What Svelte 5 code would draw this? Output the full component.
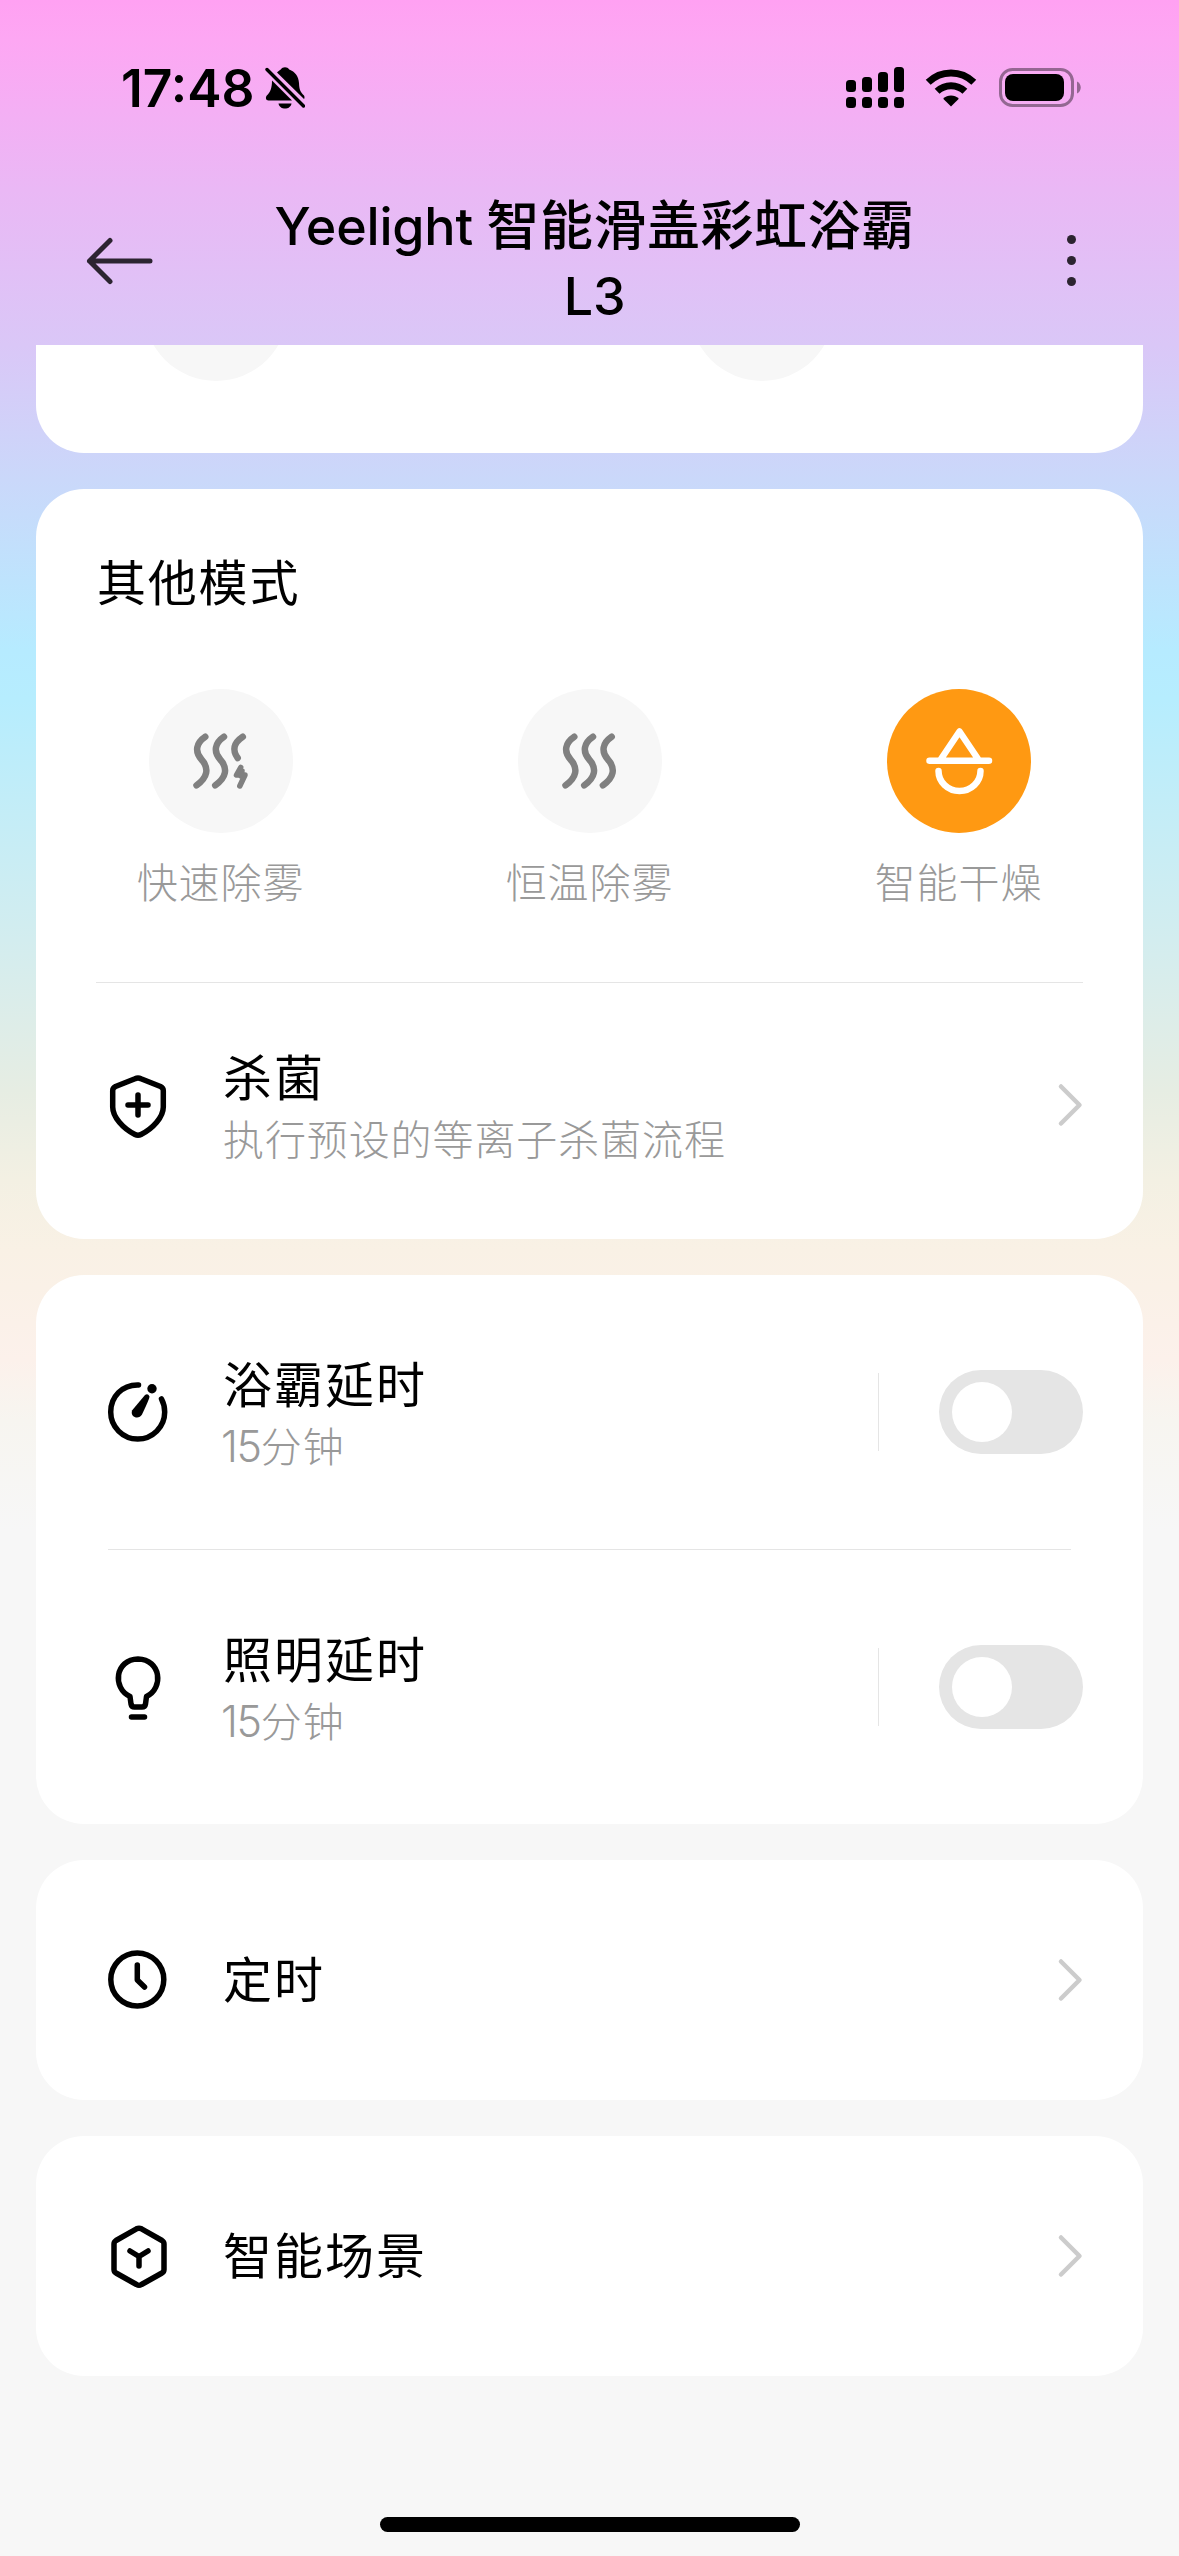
<script>
  let bathDelay = $state(false);
  let lightDelay = $state(false);

  const modes = [
    { id: "fast", name: "快速除雾", active: false },
    { id: "steady", name: "恒温除雾", active: false },
    { id: "dry", name: "智能干燥", active: true },
  ];
</script>

{#snippet chevron()}
  <svg class="chevron" width="26" height="46" viewBox="0 0 26 46">
    <path d="M4 4.500 L22.500 23 L4 41.500" />
  </svg>
{/snippet}

<div class="page">
  <div class="status-bar">
    <span class="time">17:48</span>
    <svg class="bell" width="40" height="44" viewBox="0 0 40 44">
      <path d="M12 6.5 C13.5 4.8 14.8 4.2 15.8 3.4 C17.5 .6 22.500 .6 24.200 3.400 C30 5.500 33.500 10 34 17 C34.200 23.500 35.500 26 39 29.500 C39.800 31 39.500 32.500 39 33 Z" />
      <path d="M7 14.500 L27 34.500 H3.500 C.8 34.500 .2 31.500 1.800 29.500 C5.500 26 7 22 7 14.500 Z" />
      <path d="M13.500 37.500 H26.500 C25.500 44.300 14.500 44.300 13.500 37.500 Z" />
      <path class="slash" d="M2 3.500 L38.500 40" />
    </svg>
    <div class="status-icons">
      <svg width="58" height="42" viewBox="0 0 58 42">
        <rect x="0" y="13" width="10" height="12" rx="3.500" />
        <rect x="16" y="10" width="10" height="15" rx="3.500" />
        <rect x="32" y="5" width="10" height="20" rx="3.500" />
        <rect x="48" y="0" width="10" height="25" rx="3.500" />
        <rect x="0" y="30" width="10" height="11" rx="3.500" />
        <rect x="16" y="30" width="10" height="11" rx="3.500" />
        <rect x="32" y="30" width="10" height="11" rx="3.500" />
        <rect x="48" y="30" width="10" height="11" rx="3.500" />
      </svg>
      <svg class="wifi" width="52" height="38" viewBox="0 0 52 38">
        <path class="arc" d="M3.200 13.300 C16 .8 36 .8 48.800 13.300" />
        <path class="arc" d="M12.100 22.300 C20 14.800 32 14.800 39.900 22.300" />
        <path d="M26 37.500 L18.200 29.700 C22.500 25.300 29.500 25.300 33.800 29.700 Z" />
      </svg>
      <svg class="battery" width="82" height="40" viewBox="0 0 82 40">
        <rect class="shell" x="1.500" y="1.500" width="72" height="36" rx="12" />
        <rect x="6" y="6" width="59" height="27" rx="8" />
        <path class="cap" d="M78 13.500 C83 15.500 83 23.500 78 25.500 Z" />
      </svg>
    </div>
  </div>

  <header>
    <button class="back" aria-label="返回">
      <svg width="68" height="48" viewBox="0 0 68 48">
        <path d="M24 3.500 L3.500 24 L24 44.500 M3.500 24 H64" />
      </svg>
    </button>
    <h1>Yeelight <span>智能滑盖彩虹浴霸</span> L3</h1>
    <button class="more" aria-label="更多">
      <i></i><i></i><i></i>
    </button>
  </header>

  <main>
    <section class="card clipped">
      <div class="circle"></div>
      <div class="circle"></div>
    </section>

    <section class="card">
      <h2>其他模式</h2>
      <div class="modes">
        {#each modes as mode (mode.id)}
          <div class="mode">
            <div class="circle" class:active={mode.active}>
              <svg width="72" height="72" viewBox="0 0 72 72">
                {#if mode.id === "dry"}
                  <path d="M18 34 L36.500 6.500 L55 34 M6.500 35.700 H66 M15.500 46 A21 20 0 0 0 57.500 46" />
                {:else}
                  <path d="M20.300 11.700 C11 18 9.500 26.500 16.500 34.500 C24.500 43.500 22.500 52.500 11.500 60.300" />
                  <path d="M39 11.700 C29.700 18 28.200 26.500 35.200 34.500 C43.200 43.500 41.200 52.500 30.200 60.300" />
                  {#if mode.id === "fast"}
                    <path d="M57.800 11.700 C48.500 18 47 25 52.700 33" />
                    <path class="bolt" d="M55.700 42.500 L51.500 50 H60 L54.800 61 M57 46 L56 51" />
                  {:else}
                    <path d="M57.700 11.700 C48.400 18 46.900 26.500 53.900 34.500 C61.900 43.500 59.900 52.500 48.900 60.300" />
                  {/if}
                {/if}
              </svg>
            </div>
            <span>{mode.name}</span>
          </div>
        {/each}
      </div>
      <hr />
      <div class="row sterilize">
        <svg class="icon" width="72" height="72" viewBox="0 0 72 72">
          <path d="M36 9 Q37.500 9 39 9.700 L58.500 17.500 Q61.300 18.800 61.300 21.500 V38 C61.300 48 51 59.500 39 65.500 Q36 67 33 65.500 C21 59.500 10.700 48 10.700 38 V21.500 Q10.700 18.800 13.500 17.500 L33 9.700 Q34.500 9 36 9 Z M36 26 V46 M26 36 H46" />
        </svg>
        <div class="text">
          <h3>杀菌</h3>
          <p>执行预设的等离子杀菌流程</p>
        </div>
        {@render chevron()}
      </div>
    </section>

    <section class="card">
      <div class="row delay">
        <svg class="icon" width="72" height="72" viewBox="0 0 72 72">
          <path d="M36.500 9 C20 8.500 8.700 21 8.700 36 A27 27 0 0 0 62.700 36 Q62.700 29 59.500 23" />
          <circle class="solid" cx="50" cy="12.700" r="4.700" />
          <path class="solid" d="M43 19 Q46 17 47.500 20.500 Q47.800 22 40 38.500 C37 44 28 41.500 30 34.500 Z" />
        </svg>
        <div class="text">
          <h3>浴霸延时</h3>
          <p><span class="digits">15</span>分钟</p>
        </div>
        <button
          class="switch"
          class:on={bathDelay}
          aria-label="浴霸延时"
          onclick={() => (bathDelay = !bathDelay)}
        ><i></i></button>
      </div>
      <hr class="inset" />
      <div class="row delay">
        <svg class="icon" width="72" height="72" viewBox="0 0 72 72">
          <path d="M28 45.500 C10 37 13 8.500 36 8 C59 8.500 62 37 44.500 45.500 L43.500 53 Q43 56 40 56 H32.500 Q29.500 56 29 53 Z" />
          <path d="M29.500 66 H42.500" />
        </svg>
        <div class="text">
          <h3>照明延时</h3>
          <p><span class="digits">15</span>分钟</p>
        </div>
        <button
          class="switch"
          class:on={lightDelay}
          aria-label="照明延时"
          onclick={() => (lightDelay = !lightDelay)}
        ><i></i></button>
      </div>
    </section>

    <section class="card">
      <div class="row single">
        <svg class="icon" width="72" height="72" viewBox="0 0 72 72">
          <circle cx="35.300" cy="35.500" r="26.500" />
          <path d="M35.300 21 V36 L42.500 43" />
        </svg>
        <div class="text"><h3>定时</h3></div>
        {@render chevron()}
      </div>
    </section>

    <section class="card">
      <div class="row single">
        <svg class="icon" width="72" height="72" viewBox="0 0 72 72">
          <path d="M34.500 8.800 Q37 7.500 39.500 8.800 L60 20.500 Q62 21.800 62 24 V49.500 Q62 51.800 60 53 L39.500 64.500 Q37 66 34.500 64.500 L14 53 Q12 51.800 12 49.500 V24 Q12 21.800 14 20.500 Z" />
          <path d="M28 31 L37 36.500 L46 31 M37 36.500 V46" />
        </svg>
        <div class="text"><h3>智能场景</h3></div>
        {@render chevron()}
      </div>
    </section>
  </main>

  <div class="home-indicator"></div>
</div>

<style>
  :global(body) {
    margin: 0;
  }

  .page {
    box-sizing: border-box;
    width: 1179px;
    height: 2556px;
    overflow: hidden;
    display: flex;
    flex-direction: column;
    font-family: Inter, "Noto Sans CJK SC", sans-serif;
    color: #000;
    background: linear-gradient(
      #ffa1f2 0,
      #fda7f3 40px,
      #eab8f5 190px,
      #dac7f7 345px,
      #cad8fa 480px,
      #b6ebff 650px,
      #b6edfe 700px,
      #d3edef 940px,
      #e6ede3 1090px,
      #f3f0e3 1180px,
      #f9f1e5 1250px,
      #fcf1eb 1360px,
      #f7f5f0 1420px,
      #f7f7f7 1530px
    );
  }

  .status-bar {
    display: flex;
    align-items: center;
    height: 176px;
    padding: 0 98px 0 121px;
  }

  .time {
    width: 131px;
    font-size: 51.5px;
    font-weight: 600;
    line-height: 60px;
  }

  .bell {
    margin-left: 13px;
  }

  .slash {
    fill: none;
    stroke: #000;
    stroke-width: 3.4;
    stroke-linecap: round;
  }

  .status-icons {
    display: flex;
    align-items: center;
    margin-left: auto;
  }

  .wifi {
    margin-left: 21px;
  }

  .arc {
    fill: none;
    stroke: #000;
    stroke-width: 7;
  }

  .battery {
    margin-left: 22px;
  }

  .shell {
    fill: none;
    stroke: #000;
    stroke-width: 3;
    opacity: 0.4;
  }

  .cap {
    opacity: 0.4;
  }

  header {
    display: flex;
    align-items: center;
    height: 169px;
    padding: 0 96px 0 86px;
  }

  button {
    border: 0;
    padding: 0;
    background: none;
    cursor: pointer;
  }

  .back {
    height: 48px;
  }

  .back path {
    fill: none;
    stroke: #2c2430;
    stroke-width: 5;
    stroke-linecap: round;
    stroke-linejoin: round;
  }

  h1 {
    flex: 1;
    margin: 0;
    padding: 3px 122px 0 98px;
    font-size: 52px;
    font-weight: 500;
    line-height: 70px;
    letter-spacing: -0.2px;
    text-align: center;
  }

  h1 span {
    font-size: 53px;
    line-height: 1;
    letter-spacing: 0.5px;
  }

  .more {
    display: flex;
    flex-direction: column;
    gap: 12px;
    width: 24px;
    align-items: center;
  }

  .more i {
    width: 9px;
    height: 9px;
    border-radius: 50%;
    background: #2c2430;
  }

  main {
    flex: 1;
    display: flex;
    flex-direction: column;
    gap: 36px;
    padding: 0 36px;
  }

  .card {
    padding: 0 60px;
    border-radius: 48px;
    background: #fff;
  }

  .circle {
    display: flex;
    align-items: center;
    justify-content: center;
    width: 144px;
    height: 144px;
    border-radius: 50%;
    background: #f7f7f7;
  }

  .circle.active {
    background: #ff9912;
  }

  .card.clipped {
    display: flex;
    align-items: flex-end;
    gap: 402px;
    height: 108px;
    padding: 0 108px;
    border-radius: 0 0 48px 48px;
    overflow: hidden;
  }

  .clipped .circle {
    flex: none;
    margin-bottom: 72px;
  }

  h2 {
    margin: 0;
    padding: 60px 0 0 1px;
    font-size: 49px;
    font-weight: 400;
    line-height: 70px;
    letter-spacing: 1.8px;
  }

  .modes {
    display: flex;
    justify-content: space-between;
    margin-top: 70px;
  }

  .mode {
    display: flex;
    flex-direction: column;
    align-items: center;
    width: 249px;
  }

  .mode svg path {
    fill: none;
    stroke: #808080;
    stroke-width: 6.5;
    stroke-linecap: round;
    stroke-linejoin: round;
  }

  .mode svg .bolt {
    stroke-width: 5.5;
  }

  .mode .active svg path {
    stroke: #fff;
  }

  .mode span {
    margin-top: 20px;
    font-size: 41px;
    font-weight: 300;
    line-height: 60px;
    letter-spacing: 0.9px;
    color: #999;
  }

  hr {
    height: 1px;
    margin: 0;
    border: 0;
    background: #e5e5e5;
  }

  .modes + hr {
    margin-top: 69px;
  }

  hr.inset {
    margin: 0 12px;
  }

  .row {
    display: flex;
    align-items: center;
  }

  .row.sterilize {
    height: 244px;
    padding-bottom: 12px;
  }

  .row.delay {
    height: 274px;
  }

  .row.single {
    height: 240px;
  }

  .icon {
    margin-left: 6px;
    fill: none;
    stroke: #000;
    stroke-width: 5.5;
    stroke-linecap: round;
    stroke-linejoin: round;
  }

  .icon .solid {
    fill: #000;
    stroke: none;
  }

  .text {
    flex: 1;
    margin-left: 49px;
    padding-top: 2px;
  }

  h3 {
    margin: 0;
    font-size: 49px;
    font-weight: 400;
    line-height: 68px;
    letter-spacing: 2px;
  }

  p {
    margin: 0;
    font-size: 41px;
    font-weight: 300;
    line-height: 54px;
    letter-spacing: 0.9px;
    color: #999;
  }

  .digits {
    margin-left: -2px;
    font-size: 43px;
    line-height: 1;
    letter-spacing: -1.3px;
  }

  .chevron {
    margin-bottom: 1px;
    fill: none;
    stroke: #ccc;
    stroke-width: 4.5;
    stroke-linecap: round;
    stroke-linejoin: round;
  }

  .delay::after {
    content: "";
    order: 1;
    width: 1px;
    height: 78px;
    background: #e5e5e5;
  }

  .switch {
    order: 2;
    width: 144px;
    height: 84px;
    margin-left: 60px;
    padding: 0 13px;
    border-radius: 42px;
    display: flex;
    align-items: center;
    background: #e5e5e5;
  }

  .switch i {
    width: 60px;
    height: 60px;
    border-radius: 50%;
    background: #fff;
  }

  .switch.on {
    justify-content: flex-end;
    background: #ff9912;
  }

  .home-indicator {
    flex: none;
    width: 420px;
    height: 15px;
    margin: 0 auto 24px;
    border-radius: 8px;
    background: #000;
  }
</style>
